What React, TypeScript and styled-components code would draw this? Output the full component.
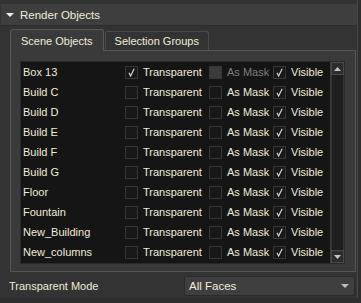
import styled, { createGlobalStyle } from "styled-components";

const Global = createGlobalStyle`
    body {
        margin: 0;
        background: #2e2e2e;
        font-family: "Liberation Sans", Arial, sans-serif;
        font-size: 11px;
        color: #f0ecd8;
    }
`;

const Page = styled.div`
    width: 361px;
    height: 303px;
    display: flex;
    background: #2e2e2e;
`;

const Panel = styled.div`
    width: 357px;
    height: 298px;
    display: flex;
    flex-direction: column;
    background: #333333;
    border-right: 1px solid #474747;
`;

const Header = styled.div`
    height: 21px;
    margin: 4px 0 0 1px;
    display: flex;
    align-items: center;
    gap: 6px;
    padding-left: 5px;
    background: #3e3e3e;
    border-bottom: 1px solid #2c2c2c;
    font-size: 11.5px;
`;

const Arrow = styled.span`
    width: 0;
    height: 0;
    border-left: 4px solid transparent;
    border-right: 4px solid transparent;
    border-top: 4px solid #f0f0f0;
`;

const TabArea = styled.div`
    padding: 2px 1px 0 10px;
    display: flex;
    flex-direction: column;
`;

const TabBar = styled.div`
    display: flex;
    align-items: flex-end;
    gap: 1px;
    height: 22px;
`;

const Tab = styled.div<{ $active?: boolean }>`
    height: ${(p) => (p.$active ? 22 : 19)}px;
    padding: 0 ${(p) => (p.$active ? 10 : 9)}px;
    display: flex;
    align-items: center;
    box-sizing: border-box;
    background: ${(p) => (p.$active ? "#3a3a3a" : "#333333")};
    border: 1px solid ${(p) => (p.$active ? "#575757" : "#4a4a4a")};
    border-bottom: none;
    border-radius: 3px 3px 0 0;
    margin-bottom: ${(p) => (p.$active ? -1 : 0)}px;
    position: relative;
    z-index: ${(p) => (p.$active ? 1 : 0)};
`;

const Pane = styled.div`
    height: 222px;
    box-sizing: border-box;
    padding: 10px 10px 8px 9px;
    background: #3a3a3a;
    border: 1px solid #555555;
`;

const List = styled.div`
    height: 203px;
    box-sizing: border-box;
    display: flex;
    background: #151515;
    border: 1px solid #2a2a2a;
`;

const Rows = styled.div`
    flex: 1;
    display: flex;
    flex-direction: column;
`;

const Row = styled.div`
    height: 20px;
    display: grid;
    grid-template-columns: 104px 84px 64px 1fr;
    align-items: center;
`;

const Name = styled.span`
    padding-left: 2px;
`;

const Cell = styled.label<{ $off?: boolean }>`
    display: flex;
    align-items: center;
    gap: 5px;
    color: ${(p) => (p.$off ? "#7e7e7e" : "inherit")};
`;

const Box = styled.span<{ $off?: boolean }>`
    width: 13px;
    height: 13px;
    box-sizing: border-box;
    border: 1px solid #363636;
    background: ${(p) => (p.$off ? "#3b3b3b" : "#181818")};
    display: flex;
    align-items: center;
    justify-content: center;
`;

const Scroll = styled.div`
    width: 13px;
    display: flex;
    flex-direction: column;
    background: #1e1e1e;
    border-left: 1px solid #3c3c3c;
`;

const ScrollBtn = styled.div`
    height: 13px;
    box-sizing: border-box;
    border: 1px solid #4a4a4a;
    background: #2c2c2c;
    display: flex;
    align-items: center;
    justify-content: center;
`;

const Track = styled.div`
    flex: 1;
    border-left: 1px solid #333;
    border-right: 1px solid #333;
`;

const Footer = styled.div`
    display: flex;
    align-items: center;
    justify-content: space-between;
    padding: 4px 2px 0 9px;
`;

const Select = styled.div`
    width: 171px;
    height: 20px;
    box-sizing: border-box;
    display: flex;
    align-items: center;
    justify-content: space-between;
    padding: 0 5px 0 4px;
    background: #3f3f3f;
    border: 1px solid #2a2a2a;
    border-radius: 2px;
    font-size: 11.5px;
`;

const Caret = styled.span`
    width: 0;
    height: 0;
    border-left: 4px solid transparent;
    border-right: 4px solid transparent;
    border-top: 4px solid #bdbdbd;
`;

function Check({ on, off }: { on?: boolean; off?: boolean }) {
    return (
        <Box $off={off}>
            {on && (
                <svg width="9" height="9" viewBox="0 0 9 9">
                    <path d="M2 4.8 L3.6 8 L7.2 0.8" fill="none" stroke="#d2d2d2" strokeWidth="1.2" />
                </svg>
            )}
        </Box>
    );
}

const names = [
    "Box 13",
    "Build C",
    "Build D",
    "Build E",
    "Build F",
    "Build G",
    "Floor",
    "Fountain",
    "New_Building",
    "New_columns",
];

export default function App() {
    return (
        <Page>
            <Global />
            <Panel>
                <Header>
                    <Arrow />
                    Render Objects
                </Header>
                <TabArea>
                    <TabBar>
                        <Tab $active>Scene Objects</Tab>
                        <Tab>Selection Groups</Tab>
                    </TabBar>
                    <Pane>
                        <List>
                            <Rows>
                                {names.map((n, i) => (
                                    <Row key={n}>
                                        <Name>{n}</Name>
                                        <Cell>
                                            <Check on={i === 0} />
                                            Transparent
                                        </Cell>
                                        <Cell $off={i === 0}>
                                            <Check off={i === 0} />
                                            As Mask
                                        </Cell>
                                        <Cell>
                                            <Check on />
                                            Visible
                                        </Cell>
                                    </Row>
                                ))}
                            </Rows>
                            <Scroll>
                                <ScrollBtn>
                                    <svg width="7" height="4" viewBox="0 0 7 4">
                                        <path d="M0 4 L3.5 0 L7 4 Z" fill="#c4c4c4" />
                                    </svg>
                                </ScrollBtn>
                                <Track />
                                <ScrollBtn>
                                    <svg width="7" height="4" viewBox="0 0 7 4">
                                        <path d="M0 0 L3.5 4 L7 0 Z" fill="#c4c4c4" />
                                    </svg>
                                </ScrollBtn>
                            </Scroll>
                        </List>
                    </Pane>
                </TabArea>
                <Footer>
                    <span>Transparent Mode</span>
                    <Select>
                        All Faces
                        <Caret />
                    </Select>
                </Footer>
            </Panel>
        </Page>
    );
}
